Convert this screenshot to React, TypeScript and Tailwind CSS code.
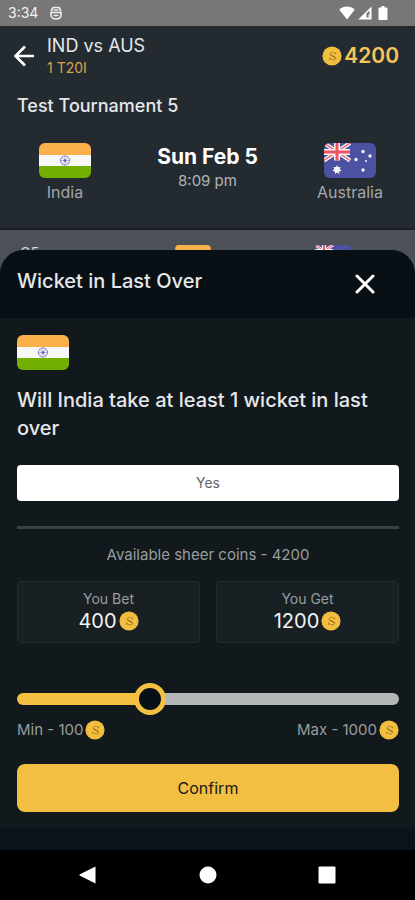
import { useState } from "react";

const MIN_BET = 100;
const MAX_BET = 1000;
const BALANCE = 4200;

function Coin() {
  return (
    <svg viewBox="0 0 20 20" className="size-5 shrink-0" aria-hidden="true">
      <circle cx="10" cy="10" r="9.6" fill="#f4c042" />
      <circle cx="10" cy="10" r="8" fill="none" stroke="#eeb638" strokeWidth="0.8" />
      <path
        d="M13.6 8.4V6.200M13.600 8C12.800 6.700 11.800 6.300 10.700 6.300c-1.600 0-2.700.6-2.700 1.800 0 2.500 5.900 1.600 5.900 4 0 1.200-1.200 1.800-2.900 1.800-1.500 0-2.700-.7-3.400-2M7.500 11.600v2.200"
        fill="none"
        stroke="#a87a1c"
        strokeWidth="0.9"
      />
      <path d="M8.300 8.600l5.300 3.400" stroke="#a87a1c" strokeWidth="1.4" />
    </svg>
  );
}

function IndiaFlag({ className }: { className: string }) {
  return (
    <svg viewBox="0 0 52 35" className={className} role="img" aria-label="India">
      <path fill="#fbb14b" d="M0 0h52v12H0z" />
      <path fill="#f8f8f8" d="M0 12h52v11H0z" />
      <path fill="#73af00" d="M0 23h52v12H0z" />
      <g fill="none" stroke="#7f84bd">
        <circle cx="26" cy="17.5" r="4.6" />
        <path strokeWidth="0.6" d="M26 13v9M21.5 17.5h9M22.8 14.3l6.4 6.4M29.2 14.3l-6.4 6.4" />
      </g>
      <circle cx="26" cy="17.5" r="1.2" fill="#5b60a8" />
    </svg>
  );
}

function AustraliaFlag({ className }: { className: string }) {
  return (
    <svg viewBox="0 0 52 35" className={className} role="img" aria-label="Australia">
      <path fill="#4c51a1" d="M0 0h52v35H0z" />
      <path stroke="#f5f5f5" strokeWidth="4" d="M0 0l26 17.5M26 0L0 17.5" />
      <path stroke="#ee6670" strokeWidth="1.5" d="M0 0l26 17.5M26 0L0 17.5" />
      <path stroke="#f5f5f5" strokeWidth="6" d="M13 0v17.5M0 9h26" />
      <path stroke="#f0525e" strokeWidth="3" d="M13 0v17.5M0 9h26" />
      <path
        fill="#f5f5f5"
        d="M13 22l1.200 2.400 2.600-.6-1.100 2.400 2.100 1.600-2.600.6v2.700L13 29.400l-2.100 1.700v-2.700l-2.600-.6 2.100-1.600-1.100-2.400 2.600.6z"
      />
      <circle cx="13" cy="26.5" r="2.8" fill="#f5f5f5" />
      <g fill="#f5f5f5">
        <circle cx="39" cy="8.5" r="1.7" />
        <circle cx="46" cy="13" r="1.7" />
        <circle cx="32" cy="16.5" r="1.7" />
        <circle cx="42" cy="18" r="1" />
        <circle cx="39" cy="27" r="1.7" />
      </g>
    </svg>
  );
}

function StatusBar() {
  return (
    <div className="flex h-[26px] shrink-0 items-center justify-between bg-[#777777] pl-2 pr-6 text-gray-100">
      <div className="flex items-center gap-3">
        <span className="text-sm leading-5">3:34</span>
        <svg viewBox="0 0 12 14" className="h-3.5 w-3" fill="none" stroke="#eeeeee" aria-hidden="true">
          <path strokeWidth="1.6" d="M1.600 5.500V4a2.500 2.500 0 0 1 2.500-2.500h3.800A2.500 2.500 0 0 1 10.400 4v1.500M1 6.500h10v2.500c0 2.500-2 4-5 4s-5-1.500-5-4z" />
          <path strokeWidth="1.4" d="M3.500 4h5M3.500 9.500h5" />
        </svg>
      </div>
      <div className="flex items-center gap-0.5" aria-hidden="true">
        <svg viewBox="0 0 16 14" className="h-3.5 w-4" fill="#ffffff">
          <path d="M8 13.500L.3 3.800C2.500 1.600 5 .5 8 .5s5.500 1.100 7.700 3.300z" />
        </svg>
        <svg viewBox="0 0 16 14" className="h-3.5 w-4" fill="#ffffff">
          <path d="M14.500.5v13H1.200z" />
          <path fill="#777777" d="M9.500 7.500l3-3v7h-3z" />
          <path d="M11.500 8.500h1v3h-1z" />
        </svg>
        <svg viewBox="0 0 16 14" className="h-3.5 w-4" fill="#ffffff">
          <path d="M6.500 1.500V0h3v1.500H11.500a1 1 0 0 1 1 1V13a1 1 0 0 1-1 1h-7a1 1 0 0 1-1-1V2.500a1 1 0 0 1 1-1z" />
        </svg>
      </div>
    </div>
  );
}

function MatchHeader() {
  return (
    <header className="h-[204px] shrink-0 border-b-2 border-[#1b2025] bg-[#242b30] pt-2">
      <div className="flex items-center pl-[13px] pr-4">
        <button type="button" aria-label="Back" className="mr-3 text-white">
          <svg viewBox="0 0 22 22" className="size-[22px]" fill="none" stroke="currentColor" strokeWidth="2.6">
            <path d="M21 11H3M12 1.500L2.500 11l9.500 9.500" />
          </svg>
        </button>
        <div className="flex-1">
          <h1 className="text-lg leading-6 text-gray-200">IND vs AUS</h1>
          <p className="text-sm leading-5 text-[#d9a548]">1 T20I</p>
        </div>
        <div className="flex items-center gap-0.5 text-[21px] font-semibold leading-6 text-[#f4c55a]">
          <Coin />
          {BALANCE}
        </div>
      </div>

      <h2 className="mt-4 px-[17px] text-lg font-medium leading-6 text-gray-200">Test Tournament 5</h2>

      <div className="mt-[25px] flex items-start justify-between px-[17px] text-center">
        <div className="flex w-24 flex-col items-center gap-1">
          <IndiaFlag className="h-[35px] w-[52px] rounded-md" />
          <span className="text-base leading-5 text-[#a3a7aa]">India</span>
        </div>
        <div>
          <p className="text-[21px] font-bold leading-7 text-white">Sun Feb 5</p>
          <p className="text-[15px] leading-5 text-[#b0b4b6]">8:09 pm</p>
        </div>
        <div className="flex w-24 flex-col items-center gap-1">
          <AustraliaFlag className="h-[35px] w-[52px] rounded-md" />
          <span className="text-base leading-5 text-[#a3a7aa]">Australia</span>
        </div>
      </div>
    </header>
  );
}

function AmountCard({ label, amount }: { label: string; amount: number }) {
  return (
    <div className="flex h-[62px] flex-col items-center justify-center rounded border border-[#232b2e] bg-[#182024] pb-0.5">
      <span className="text-sm leading-5 text-[#999d9f]">{label}</span>
      <span className="flex items-center gap-0.5 text-xl leading-6 text-gray-100">
        {amount}
        <Coin />
      </span>
    </div>
  );
}

function BetSheet() {
  const [bet, setBet] = useState(400);
  const percent = ((bet - MIN_BET) / (MAX_BET - MIN_BET)) * 100;

  return (
    <section className="relative -mt-6 flex flex-1 flex-col overflow-hidden rounded-t-3xl bg-[#11191c]">
      <div className="flex h-[68px] items-center justify-between bg-[#091015] pl-[17px] pr-10">
        <h2 className="pb-1.5 text-xl font-medium leading-7 text-gray-200">Wicket in Last Over</h2>
        <button type="button" aria-label="Close" className="text-white">
          <svg viewBox="0 0 20 20" className="size-5" fill="none" stroke="currentColor" strokeWidth="3" strokeLinecap="round">
            <path d="M2 2l16 16M18 2L2 18" />
          </svg>
        </button>
      </div>

      <div className="pl-[17px] pr-4 pt-[17px]">
        <IndiaFlag className="h-[35px] w-[52px] rounded-md" />
        <p className="mt-4 text-xl font-medium leading-7 text-gray-200">
          Will India take at least 1 wicket in last over
        </p>

        <button type="button" className="mt-[23px] h-9 w-full rounded-sm bg-white text-sm text-[#666666]">
          Yes
        </button>

        <hr className="mt-[25px] border-t-[3px] border-[#3a4144]" />

        <p className="mt-4 text-center text-[15px] leading-5 text-[#999d9f]">
          Available sheer coins - {BALANCE}
        </p>

        <div className="mt-4 grid grid-cols-2 gap-4">
          <AmountCard label="You Bet" amount={bet} />
          <AmountCard label="You Get" amount={bet * 3} />
        </div>

        <input
          type="range"
          aria-label="Bet amount"
          min={MIN_BET}
          max={MAX_BET}
          step={100}
          value={bet}
          onChange={(e) => setBet(Number(e.target.value))}
          style={{
            backgroundImage: `linear-gradient(to right, #f4c042 ${percent}%, #b2b6b6 ${percent}%)`,
          }}
          className="mt-[50px] block h-3 w-full appearance-none rounded-full [&::-webkit-slider-thumb]:size-8 [&::-webkit-slider-thumb]:appearance-none [&::-webkit-slider-thumb]:rounded-full [&::-webkit-slider-thumb]:border-[5px] [&::-webkit-slider-thumb]:border-[#f4c042] [&::-webkit-slider-thumb]:bg-[#091015]"
        />

        <div className="mt-[15px] flex justify-between text-[15px] leading-5 text-[#999d9f]">
          <span className="flex items-center gap-0.5">
            Min - {MIN_BET}
            <Coin />
          </span>
          <span className="flex items-center gap-0.5">
            Max - {MAX_BET}
            <Coin />
          </span>
        </div>

        <button type="button" className="mt-6 h-12 w-full rounded-lg bg-[#f2bf43] text-base text-[#1c1a12]">
          Confirm
        </button>
      </div>

      <div className="mt-4 flex-1 bg-[#0a131a]" />
    </section>
  );
}

function SystemNav() {
  return (
    <nav className="flex h-[50px] shrink-0 items-center justify-between bg-black px-[79px] text-white">
      <button type="button" aria-label="Back">
        <svg viewBox="0 0 18 18" className="size-[18px]" fill="currentColor">
          <path d="M16.500.5v17L.5 9.500v-1z" />
        </svg>
      </button>
      <button type="button" aria-label="Home">
        <svg viewBox="0 0 18 18" className="size-[18px]" fill="currentColor">
          <circle cx="9" cy="9" r="8.5" />
        </svg>
      </button>
      <button type="button" aria-label="Recent apps">
        <svg viewBox="0 0 18 18" className="size-[18px]" fill="currentColor">
          <rect x="0.5" y="0.5" width="17" height="17" rx="1" />
        </svg>
      </button>
    </nav>
  );
}

export default function App() {
  return (
    <div className="flex min-h-screen flex-col bg-[#4b5156] font-['Inter',sans-serif]">
      <StatusBar />
      <MatchHeader />

      {/* Question list, mostly hidden by the sheet */}
      <div className="flex h-11 shrink-0 items-start justify-between overflow-hidden pl-5 pr-16 pt-[15px]">
        <span className="w-[50px] text-sm leading-4 text-gray-300">Q5</span>
        <IndiaFlag className="h-6 w-9 rounded" />
        <AustraliaFlag className="h-6 w-9 rounded" />
      </div>

      <BetSheet />
      <SystemNav />
    </div>
  );
}
